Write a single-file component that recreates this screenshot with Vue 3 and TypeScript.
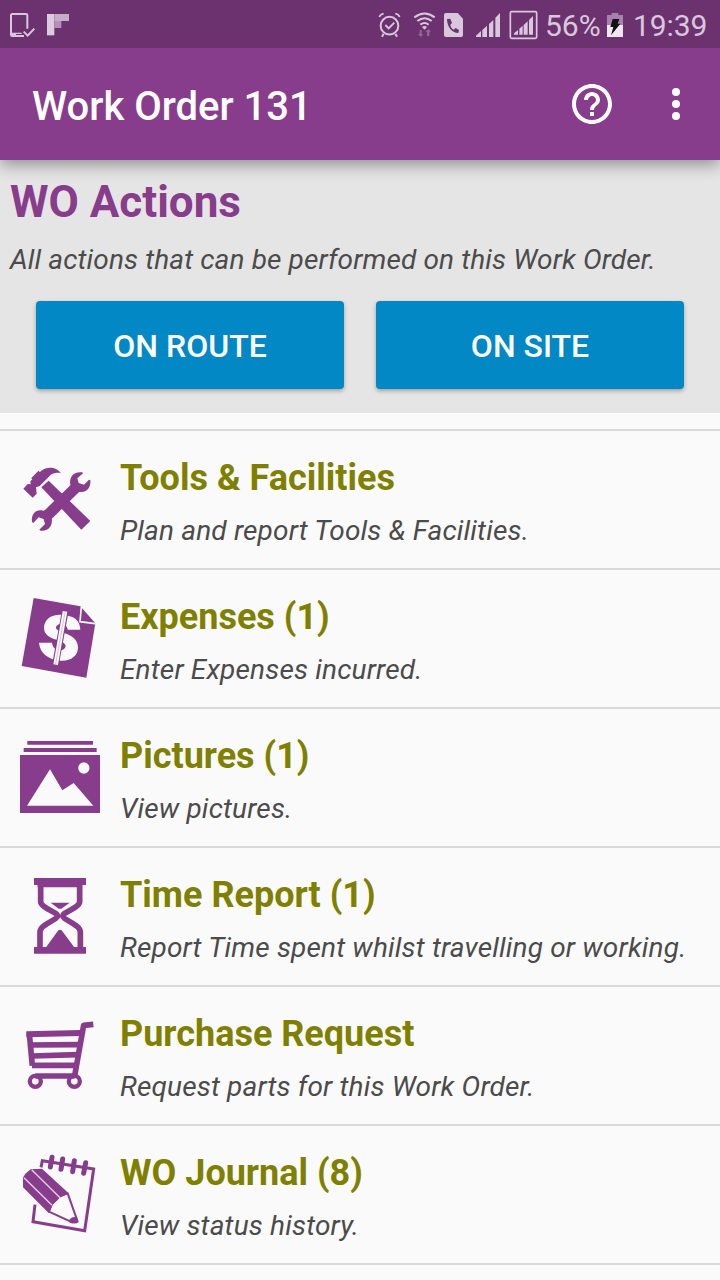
<script setup lang="ts">
type IconName = 'tools' | 'expenses' | 'pictures' | 'time' | 'cart' | 'journal'

interface ActionItem {
  icon: IconName
  viewBox: string
  title: string
  text: string
}

const buttons: string[] = ['ON ROUTE', 'ON SITE']

const items: ActionItem[] = [
  { icon: 'tools', viewBox: '0 -57 360 411', title: 'Tools & Facilities', text: 'Plan and report Tools & Facilities.' },
  { icon: 'expenses', viewBox: '0 -45 360 411', title: 'Expenses (1)', text: 'Enter Expenses incurred.' },
  { icon: 'pictures', viewBox: '0 -48 360 411', title: 'Pictures (1)', text: 'View pictures.' },
  { icon: 'time', viewBox: '0 -51 360 411', title: 'Time Report (1)', text: 'Report Time spent whilst travelling or working.' },
  { icon: 'cart', viewBox: '0 -54 360 411', title: 'Purchase Request', text: 'Request parts for this Work Order.' },
  { icon: 'journal', viewBox: '0 -42 360 411', title: 'WO Journal (8)', text: 'View status history.' },
]
</script>

<template>
  <div class="screen">
    <div class="status">
      <svg width="72" height="48" viewBox="0 0 216 144">
        <path d="M82 86V46q0-4-4-4H37q-4 0-4 4v58q0 4 4 4h35" fill="none" stroke="#d9c8db" stroke-width="6" />
        <path d="M33 98h32v4H48v7H33z" fill="#d9c8db" />
        <path d="M71 95l12 12 20-21" fill="none" stroke="#d9c8db" stroke-width="6" />
        <path d="M141 42h22v64h-22z" fill="#dccbde" />
        <path d="M163 42h44v21h-44z" fill="#c5acc8" />
        <path d="M163 63h21v21h-21z" fill="#b391b7" />
      </svg>
      <div class="status-right">
        <svg width="36" height="48" viewBox="0 0 108 144" fill="none" stroke="#d9c8db">
          <circle cx="58.500" cy="77" r="26.500" stroke-width="6" />
          <path d="M46 75l10 10 17-17" stroke-width="5.500" />
          <path d="M28 51q4-9 13-10M89 51q-4-9-13-10" stroke-width="5" />
          <path d="M41 101l-5 9M76 101l5 9" stroke-width="6" />
        </svg>
        <svg width="34" height="48" viewBox="108 0 102 144">
          <g fill="none" stroke="#d9c8db" stroke-width="6">
            <path d="M133 52q31-23 61 0" />
            <path d="M142 63q22-17 43 0" />
            <path d="M151 74q13-10 25 0" />
          </g>
          <path d="M156 81q8-6 15 0l-7.500 8z" fill="#d9c8db" />
          <path d="M149 90h6v12h5l-8 9-8-9h5zM171 108h7V96h5l-8-9-9 9h5z" fill="#93669a" />
        </svg>
        <svg width="30" height="48" viewBox="210 0 90 144">
          <path d="M228 39h35l16 17v49q0 6-6 6h-45q-6 0-6-6V45q0-6 6-6z" fill="#d9c8db" />
          <path d="M231 57c0 22 14 42 34 42l2-9-10-6-6 5c-6-3-9-9-10-15l5-5-5-13z" fill="#6c3270" />
        </svg>
        <svg width="36" height="48" viewBox="300 0 108 144">
          <path d="M318 111v-4l15-14v18zM337 111V90l14-13v34zM357 111V72l13-12v51zM376 111V53l14-14v72z" fill="#d9c8db" />
        </svg>
        <svg width="34" height="48" viewBox="408 0 102 144">
          <rect x="421" y="35" width="79" height="80" rx="4" fill="none" stroke="#d9c8db" stroke-width="5" />
          <path d="M432 104v-4l12-10v14zM448 104V86l10-9v27zM461 104V75l12-11v40zM477 104V60l12-12v56z" fill="#d9c8db" />
        </svg>
        <span class="percent">56%</span>
        <svg width="30" height="48" viewBox="699 0 90 144">
          <path d="M711 45h14v-6h20v6h14v30h-48z" fill="#a582a9" />
          <path d="M711 75h48v36h-48z" fill="#f0e8f1" />
          <path d="M728 57h20l-5 14h8l-28 35 7-25h-9z" fill="#111" />
        </svg>
        <span class="clock">19:39</span>
      </div>
    </div>

    <header class="appbar">
      <h1>Work Order 131</h1>
      <svg class="help" width="48" height="48" viewBox="0 0 24 24" fill="#fff">
        <path d="M11 18h2v-2h-2v2zm1-16C6.480 2 2 6.480 2 12s4.480 10 10 10 10-4.480 10-10S17.520 2 12 2zm0 18c-4.410 0-8-3.590-8-8s3.590-8 8-8 8 3.590 8 8-3.590 8-8 8zm0-14c-2.210 0-4 1.790-4 4h2c0-1.100.9-2 2-2s2 .9 2 2c0 2-3 1.750-3 5h2c0-2.250 3-2.500 3-5 0-2.210-1.790-4-4-4z" />
      </svg>
      <svg class="more" width="48" height="48" viewBox="0 0 24 24" fill="#fff">
        <circle cx="12" cy="6" r="2" /><circle cx="12" cy="12" r="2" /><circle cx="12" cy="18" r="2" />
      </svg>
    </header>

    <section class="intro">
      <h2>WO Actions</h2>
      <p>All actions that can be performed on this Work Order.</p>
      <div class="buttons">
        <button v-for="label in buttons" :key="label" type="button">{{ label }}</button>
      </div>
    </section>

    <ul class="list">
      <li v-for="item in items" :key="item.icon">
        <svg class="icon" width="120" height="137" :viewBox="item.viewBox" fill="#873c8c">
          <template v-if="item.icon === 'tools'">
            <path d="M124 112L146 92 271 213 244 239z" />
            <path d="M150 152L96 206 122 234 240 116 214 92z" opacity="0" />
            <path d="M228 112L131 207" stroke="#873c8c" stroke-width="33" />
            <path d="M211 104C207 80 222 63 247 67L249 70 232 85 236 99 252 104 267 89 271 91C273 117 256 130 236 125L222 128z" />
            <path d="M155 203C159 227 146 244 122 242L118 239 135 222 131 207 116 202 100 219 96 216C93 191 108 177 130 182L144 180z" />
            <path d="M70 116L83 102 92 103 91 94 124 62C140 49 169 49 183 70 168 66 155 71 148 79L119 108 108 112 110 131 98 143z" />
            <path d="M96 87L118 65" stroke="#873c8c" stroke-width="7" />
          </template>
          <template v-else-if="item.icon === 'expenses'">
            <path d="M101 39l140 25 45 51-27 163-194-35z" />
            <path d="M244 66l-4 44 46 6" fill="none" stroke="#fafafa" stroke-width="5" />
            <path d="M207 93c19 4 33 16 34 41h-38c-2-12-10-18-18-18-9 0-17 5-17 12 0 17 66 13 66 59 0 27-23 42-51 40-36-2-64-22-66-54h39c2 14 11 23 23 23 10 0 17-5 18-13-1-23-65-14-65-55 1-29 30-47 75-35z" fill="#fafafa" />
            <path d="M195 82l-28 154" stroke="#873c8c" stroke-width="20" />
            <path d="M195 79l-28 160" stroke="#fafafa" stroke-width="14" />
            <path d="M195 82l-28 155" stroke="#c9a4cc" stroke-width="2" />
          </template>
          <template v-else-if="item.icon === 'pictures'">
            <path d="M82 48h197v11H82zM71 69h219v12H71zM60 90h240v174H60z" />
            <path d="M81 242l69-109 37 63 34-22 59 68z" fill="#fafafa" />
            <circle cx="251.500" cy="129" r="17" fill="#fafafa" />
          </template>
          <template v-else-if="item.icon === 'time'">
            <path d="M102 39h156v21H102zM113 58h133v9H113zM102 246h156v20H102z" />
            <path d="M122 60v50c0 18 51 32 51 42 0 13-52 26-53 48v52M239 60v50c0 18-51 32-51 42 0 13 52 26 53 48v52" fill="none" stroke="#873c8c" stroke-width="17" />
            <path d="M152 113h57l-25 18h-8zM136 250L174 197q6-6 12 0L225 250z" />
          </template>
          <template v-else-if="item.icon === 'cart'">
            <g fill="none" stroke="#873c8c">
              <path d="M280 58l-29 3-27 151" stroke-width="17" stroke-linejoin="round" />
              <path d="M79 88l164-4" stroke-width="18" />
              <path d="M88 86l9 96" stroke-width="17" />
              <path d="M92 120l144-1M96 153l138-4M96 181h131" stroke-width="17" stroke-linejoin="round" />
              <path d="M106 213h118" stroke-width="16" />
              <circle cx="106" cy="229" r="16.500" stroke-width="13" />
              <circle cx="223" cy="229" r="16.500" stroke-width="13" />
            </g>
          </template>
          <template v-else>
            <g fill="none" stroke="#873c8c" stroke-width="9">
              <path d="M123 82l4-20 154 25-27 185-155-27 6-51" />
              <path d="M156 52l-5 29M188 57l-5 31M223 62l-5 33M257 68l-6 32" stroke-width="15" stroke-linecap="round" />
            </g>
            <path d="M203 160L232 242 217 247 147 215 155 193 180 169z" fill="#fafafa" stroke="#873c8c" stroke-width="6" stroke-linejoin="round" />
            <path d="M69 113L76 101 92 88 126 86 206 160 180 172 158 194 146 219 69 142z" />
            <path d="M95 89L180 173M72 113L156 196" fill="none" stroke="#e6d3e7" stroke-width="4" />
            <path d="M209 238Q218 228 230 232L236 246Q226 255 208 247z" />
          </template>
        </svg>
        <div class="copy">
          <h3>{{ item.title }}</h3>
          <p>{{ item.text }}</p>
        </div>
      </li>
    </ul>
  </div>
</template>

<style>
html,
body {
  margin: 0;
  overflow: hidden;
  background: #fafafa;
}
</style>

<style scoped>
.screen {
  width: 720px;
  height: 1280px;
  overflow: hidden;
  background: #fafafa;
  font-family: Roboto, "Liberation Sans", sans-serif;
}
svg {
  display: block;
  flex: none;
}
h1,
h2,
h3,
p,
ul {
  margin: 0;
  padding: 0;
}
.status {
  position: relative;
  z-index: 2;
  height: 48px;
  display: flex;
  justify-content: space-between;
  background: #6c3270;
  color: #d9c8db;
}
.status-right {
  width: 350px;
  display: flex;
  font-size: 30px;
  line-height: 52px;
  white-space: nowrap;
}
.percent {
  width: 58px;
  padding-left: 5px;
}
.clock {
  letter-spacing: -0.1px;
}
.appbar {
  position: relative;
  z-index: 1;
  height: 112px;
  display: flex;
  align-items: center;
  background: #873c8c;
  color: #fff;
  box-shadow: 0 4px 16px rgba(0, 0, 0, 0.4);
}
h1 {
  flex: 1;
  padding: 6px 0 0 32px;
  font-size: 40px;
  line-height: 48px;
  font-weight: 500;
}
.help {
  margin-right: 36px;
}
.more {
  margin-right: 20px;
}
.intro {
  height: 253px;
  box-sizing: border-box;
  padding-top: 14px;
  background: #e5e5e5;
}
h2 {
  padding-left: 10px;
  font-size: 44px;
  line-height: 56px;
  font-weight: 700;
  color: #873c8c;
}
p {
  font-size: 28px;
  line-height: 36px;
  font-style: italic;
  letter-spacing: 0.17px;
  color: #4b4b4b;
  white-space: nowrap;
}
.intro p {
  padding: 12px 0 0 10px;
  letter-spacing: 0.13px;
}
.buttons {
  display: flex;
  gap: 32px;
  padding: 23px 36px 0;
}
button {
  flex: 1;
  height: 88px;
  padding: 2px 0 0;
  border: 0;
  border-radius: 4px;
  background: #0288c4;
  color: #fff;
  font: 500 32px/40px Roboto, "Liberation Sans", sans-serif;
  box-shadow: 0 2px 4px rgba(0, 0, 0, 0.3);
}
.list {
  margin-top: 16px;
  list-style: none;
  border-bottom: 2px solid #d9d9d9;
}
li {
  display: flex;
  height: 137px;
  border-top: 2px solid #d9d9d9;
}
.copy {
  padding-top: 25px;
}
h3 {
  font-size: 36px;
  line-height: 44px;
  font-weight: 700;
  color: #808000;
  white-space: nowrap;
}
.copy p {
  padding-top: 13px;
}
</style>
